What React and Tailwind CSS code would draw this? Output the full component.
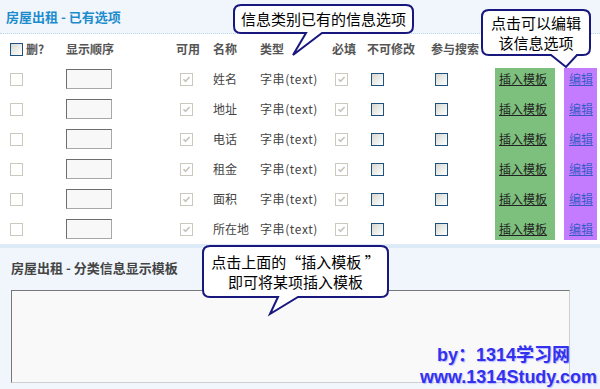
import React from "react";

const rows = ["姓名", "地址", "电话", "租金", "面积", "所在地"];

function BoxOff() {
  return <span className="block w-[13px] h-[13px] border border-[#cbc9bd] bg-white" />;
}
function BoxDisabledChecked() {
  return (
    <span className="relative block w-[13px] h-[13px] border border-[#cbc9bd] bg-white">
      <svg viewBox="0 0 11 11" className="absolute left-0 top-0 w-[11px] h-[11px]">
        <path d="M2.5 5.2 L4.5 7.3 L8.6 3" fill="none" stroke="#c4c4bc" strokeWidth="1.6" />
      </svg>
    </span>
  );
}
function BoxOn() {
  return <span className="block w-[13px] h-[13px] border border-[#1c5180] bg-gradient-to-br from-[#d8d8d2] to-white" />;
}

function bubblePath(x0, y0, x1, y1, r, a, tx, ty, b) {
  return `M${x0 + r},${y0} H${x1 - r} Q${x1},${y0} ${x1},${y0 + r} V${y1 - r} Q${x1},${y1} ${x1 - r},${y1} H${b} L${tx},${ty} L${a},${y1} H${x0 + r} Q${x0},${y1} ${x0},${y1 - r} V${y0 + r} Q${x0},${y0} ${x0 + r},${y0} Z`;
}

export default function App() {
  return (
    <div className="relative w-[600px] h-[389px] overflow-hidden bg-white font-['Noto_Sans_CJK_SC','Noto_Sans',sans-serif] text-[#444]">
      <div className="flex h-full flex-col">
        {/* header */}
        <div className="flex h-[34px] items-center border-b border-dotted border-[#b9d7ef] bg-[#f0f6fc] pl-[6px]">
          <span className="text-[13px] font-bold text-[#1c8ccd]">房屋出租 - 已有选项</span>
        </div>
        {/* column header */}
        <div className="flex h-[30px] items-center pl-[10px] text-[12px] font-bold text-[#555]">
          <div className="flex w-[56px] items-center gap-[3px]">
            <BoxOn />
            <span>删?</span>
          </div>
          <div className="w-[110px]">显示顺序</div>
          <div className="w-[37px]">可用</div>
          <div className="w-[47px]">名称</div>
          <div className="w-[72px]">类型</div>
          <div className="w-[35px]">必填</div>
          <div className="w-[64px]">不可修改</div>
          <div>参与搜索</div>
        </div>
        {/* rows */}
        <div className="flex h-[180px]">
          <div className="flex w-[495px] flex-col">
            {rows.map((name) => (
              <div key={name} className="flex h-[30px] items-center pl-[10px] text-[12px] text-[#444]">
                <div className="w-[56px]"><BoxOff /></div>
                <div className="w-[114px]">
                  <div className="h-[20px] w-[46px] border border-[#a8a8a8] border-l-[#6e6e6e] border-t-[#6e6e6e] bg-[#f8f8f8]" />
                </div>
                <div className="w-[33px]"><BoxDisabledChecked /></div>
                <div className="w-[47px]">{name}</div>
                <div className="w-[75px] tracking-[0.6px]">字串(text)</div>
                <div className="w-[36px]"><BoxDisabledChecked /></div>
                <div className="w-[64px]"><BoxOn /></div>
                <div className="w-[60px]"><BoxOn /></div>
              </div>
            ))}
          </div>
          <div className="mt-[4px] h-[172px] w-[60px] overflow-hidden bg-[#7dc07d]">
            <div className="-mt-[4px] flex flex-col">
              {rows.map((n) => (
                <div key={n} className="flex h-[30px] items-center pl-[4px] text-[12px] text-[#222] underline">插入模板</div>
              ))}
            </div>
          </div>
          <div className="ml-[9px] mt-[4px] h-[172px] w-[33px] overflow-hidden bg-[#c47cff]">
            <div className="-mt-[4px] flex flex-col">
              {rows.map((n) => (
                <div key={n} className="flex h-[30px] items-center pl-[5px] text-[12px] text-[#3a5cc8] underline">编辑</div>
              ))}
            </div>
          </div>
        </div>
        <div className="h-[4px] bg-[#dcebf7]" />
        {/* section 2 */}
        <div className="flex flex-1 flex-col bg-[#f0f6fc] pl-[11px] pt-[10px]">
          <div className="h-[20px] text-[13px] font-bold leading-[20px] text-[#444]">房屋出租 - 分类信息显示模板</div>
          <div className="mt-[12px] h-[93px] w-[559px] border border-[#cfcfcf] border-l-[#777] border-t-[#777] bg-[#f9f9f9]" />
        </div>
      </div>

      {/* callouts */}
      <svg className="pointer-events-none absolute left-0 top-0" width="600" height="389">
        <path d={bubblePath(234, 5, 413, 33, 7, 306, 293, 55, 322)} fill="white" stroke="#17177e" strokeWidth="2" />
        <path d={bubblePath(482, 10, 590, 55, 7, 551, 566, 67, 577)} fill="white" stroke="#17177e" strokeWidth="2" />
        <path d={bubblePath(203, 246, 388, 297, 7, 278, 270, 314, 298)} fill="white" stroke="#17177e" strokeWidth="2" />
      </svg>
      <div className="absolute left-[234px] top-[5px] flex h-[28px] w-[179px] items-center justify-center text-[15px] leading-[20px] text-black">
        信息类别已有的信息选项
      </div>
      <div className="absolute left-[482px] top-[10px] flex h-[45px] w-[108px] flex-col items-center justify-center text-[15px] leading-[20px] text-black">
        <span>点击可以编辑</span>
        <span>该信息选项</span>
      </div>
      <div className="absolute left-[203px] top-[246px] flex h-[51px] w-[185px] flex-col items-center justify-center text-[15px] leading-[20px] text-black">
        <span>点击上面的“插入模板 ”</span>
        <span>即可将某项插入模板</span>
      </div>

      {/* watermark */}
      <div className="absolute left-[420px] top-[344px] whitespace-nowrap font-['Liberation_Sans','Noto_Sans_CJK_SC',sans-serif] text-[18px] font-bold leading-[22px] text-[#3232ee] [text-shadow:1px_1px_1px_#b8b8ff,0_0_2px_#ffffff]">
        <div className="pl-[17px]">by：1314学习网</div>
        <div>www.1314Study.com</div>
      </div>
    </div>
  );
}
